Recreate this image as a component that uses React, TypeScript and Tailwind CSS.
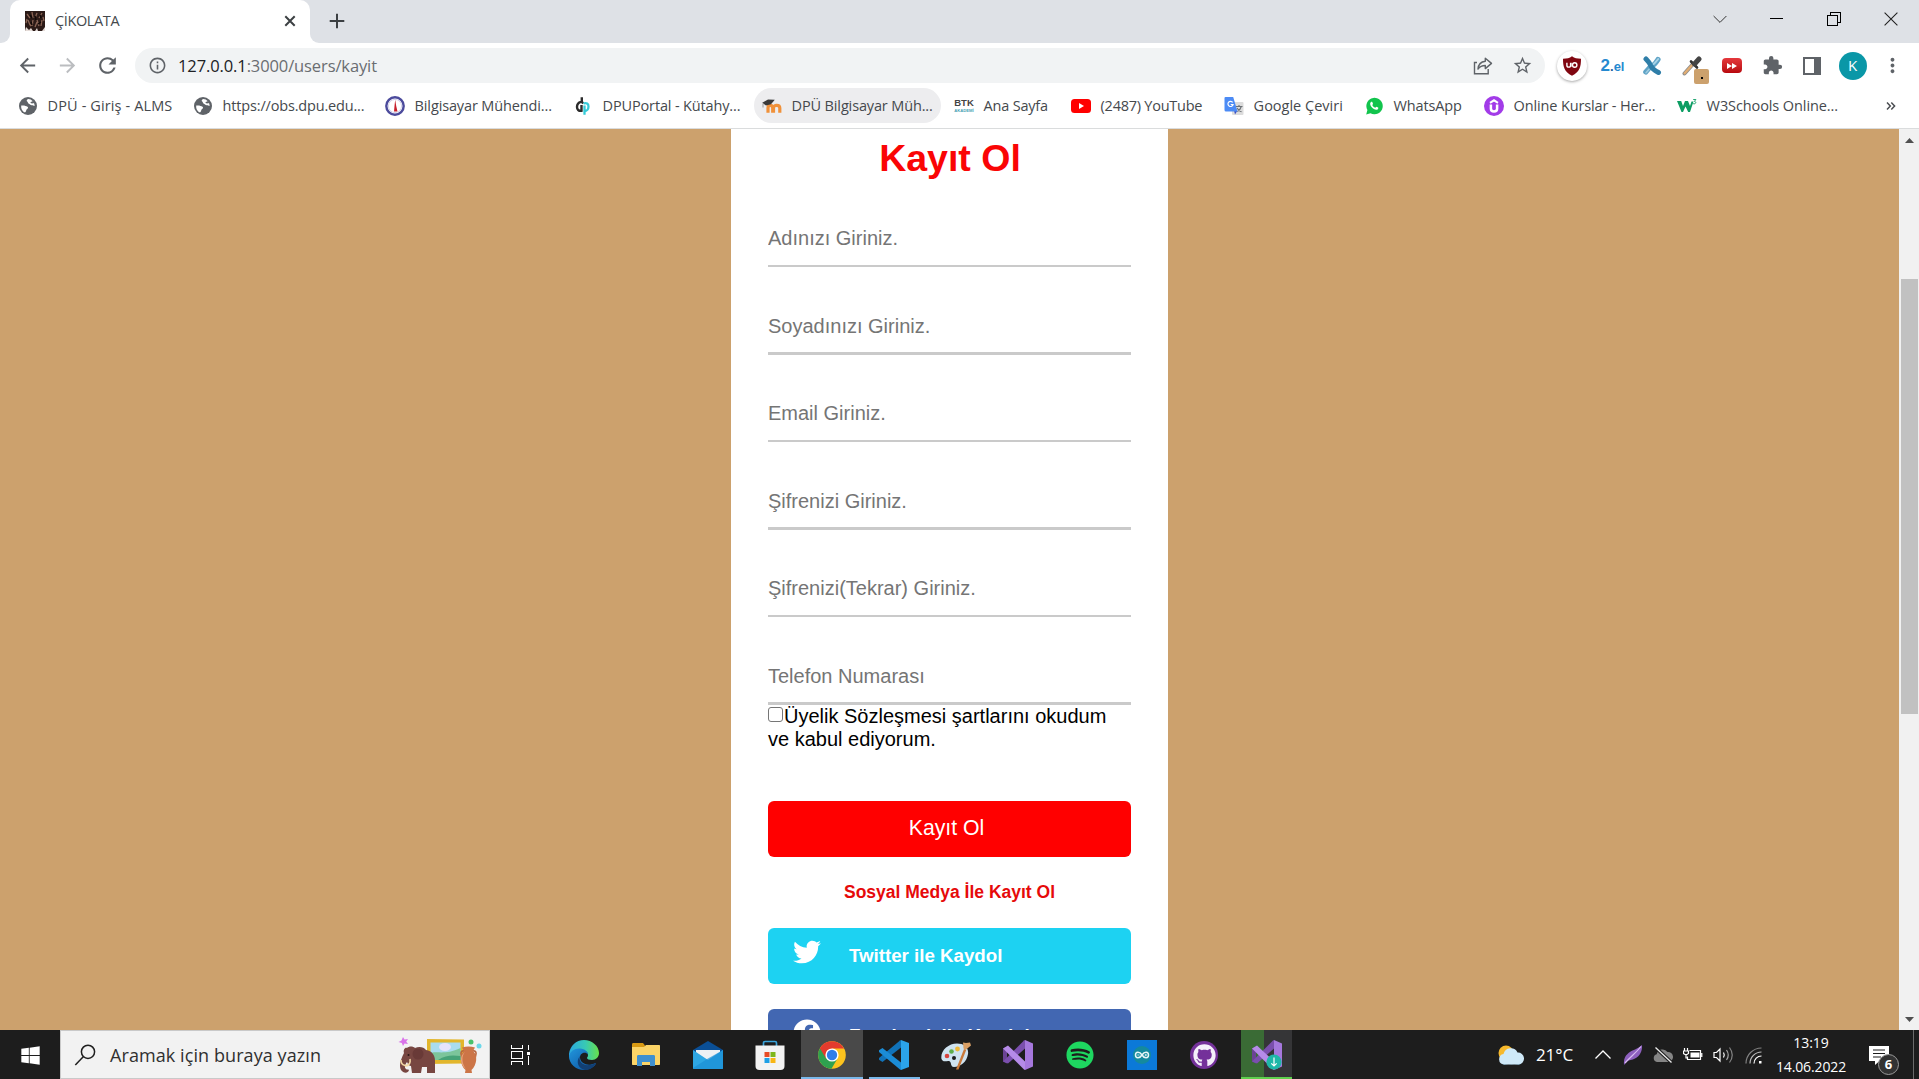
import React from 'react';
import type { ReactNode } from 'react';
import {
  MdArrowBack,
  MdArrowForward,
  MdExtension,
  MdInfoOutline,
  MdMoreVert,
  MdRefresh,
  MdStarBorder,
} from 'react-icons/md';
import { FaFacebook, FaGithub, FaSpotify, FaTwitter, FaWindows } from 'react-icons/fa';

/* ---------- Bookmark icons ---------- */

const Globe = () => (
  <svg viewBox="0 0 20 20" className="size-5">
    <circle cx="10" cy="10" r="9" fill="#5f6368" />
    <path d="M3.200 9.600c2.400-.6 4.800.2 6.300 1.200.9.7.6 1.900-.4 2.300-.9.4-.8 1.800-1.500 2.800-.4.5-1.100.6-1.600.3A7.200 7.200 0 0 1 3.200 9.600z" fill="#fff" />
    <path d="M10.300 3.100c-1.700.6-2 1.800-1.100 2.500 1 .7.4 1.700 1.700 2.200 1.400.5 1.600 1.500 3 1.400 1.300-.1 1.700.8 2.900.5A7 7 0 0 0 10.300 3.100z" fill="#fff" />
    <path d="M14.800 4.900c-.9.8-2 .5-2.500 1.500l1.500 1.100 2.700-.5z" fill="#5f6368" />
  </svg>
);

const Seal = () => (
  <svg viewBox="0 0 20 20" className="size-5">
    <circle cx="10" cy="10" r="8.700" fill="#fff" stroke="#4b4a9c" strokeWidth="2.400" />
    <circle cx="10" cy="10" r="6.600" fill="none" stroke="#c9c8e4" strokeWidth=".8" />
    <path d="M10.200 3.800l1 6.200 1.300 5.500H9l.5-5.500z" fill="#c8202c" />
  </svg>
);

const Dpu = () => (
  <svg viewBox="0 0 20 20" className="size-5" fill="none">
    <path d="M8.800 1.200v4.600l1.500 1.700M8 5.800C5.200 6.500 4 8.500 4 11s1.700 4.200 4.500 3.800V9" stroke="#2b2b2b" strokeWidth="2.400" />
    <path d="M11.500 18.800V9.500M10.500 7.500c3-1.200 5 .3 5 3s-1.700 4.700-4 4.700" stroke="#35cbd8" strokeWidth="2.300" />
  </svg>
);

const Moodle = () => (
  <svg viewBox="0 0 20 20" className="size-5" fill="none">
    <path d="M6 16.800v-5c0-3.200 4.500-3.200 4.700 0v5M11.500 16.800v-5c0-3.200 6.300-3.200 6.300.2v4.800" stroke="#f0913a" strokeWidth="3.200" />
    <path d="M.2 6.800L6 3.500l6.800.3L9 8.200 4 9.500z" fill="#3a3a3a" />
    <path d="M1 7.500v4" stroke="#999" />
  </svg>
);

const Btk = () => (
  <span className="flex w-5 flex-col items-center font-['Liberation_Sans'] leading-none">
    <span className="text-[9.5px] font-bold text-[#444]">BTK</span>
    <span className="mt-px text-[4.200px] font-bold text-[#4aa3b5]">AKADEMİ</span>
  </span>
);

const YouTube = () => (
  <svg viewBox="0 0 20 20" className="size-5">
    <rect y="3" width="20" height="14" rx="3.500" fill="#f00" />
    <path d="M8 7l5 3-5 3z" fill="#fff" />
  </svg>
);

const Translate = () => (
  <svg viewBox="0 0 20 20" className="size-5">
    <rect x="8" y="6" width="11.500" height="13" rx="1" fill="#dcdcdc" />
    <path d="M11.500 10.500h7M15 9v1.500M17.300 10.500c-.6 2.500-2.500 4-4 5M13 12c.8 1.500 2.800 3.200 4.500 3.800" stroke="#6b7075" strokeWidth="1.100" fill="none" />
    <path d="M10 14.500l3.500 0-2.500 4z" fill="#3a4fc4" />
    <path d="M1.500 1h7.700L13.500 15.500H2A1.500 1.500 0 0 1 .5 14V2A1 1 0 0 1 1.500 1z" fill="#4c8bf5" />
    <path d="M8.700 6.400A2.600 2.600 0 1 0 9.100 8.500H6.700" stroke="#fff" strokeWidth="1.200" fill="none" />
  </svg>
);

const WhatsApp = () => (
  <svg viewBox="0 0 20 20" className="size-5">
    <path d="M2.200 18.400l1.200-4.300A8.200 8.200 0 1 1 6.500 17.200z" fill="#12c44d" />
    <path d="M7.300 5.800c.5-.2.9-.1 1.100.4l.6 1.500c.1.5-.6 1-.7 1.300.6 1.300 1.600 2.200 2.900 2.700.4 0 .9-1.100 1.300-1l1.600.8c.5.3.1 1.500-.5 1.900-3 1.700-8.400-3.500-7.300-6.400.2-.6.600-1 1-1.200z" fill="#fff" />
  </svg>
);

const Udemy = () => (
  <svg viewBox="0 0 20 20" className="size-5" fill="none">
    <circle cx="10" cy="10" r="10" fill="#a23be8" />
    <path d="M6 6.800l4-2.500 4 2.500" stroke="#fff" strokeWidth="2" />
    <path d="M6.900 8.500v4.200c0 3.600 6.200 3.600 6.200 0V8.500" stroke="#fff" strokeWidth="2.500" />
  </svg>
);

const W3 = () => (
  <svg viewBox="0 0 20 20" className="size-5">
    <path d="M0 5h4.200l1.800 5 2-5h3l2 5 1.500-4.500h2L13 16h-1.800L8.500 10.500 6 16H4.500z" fill="#0c9d63" />
    <path d="M16.200 3.500h2.700l-1.500 1.900c2 .1 1.700 2.400-.2 2.400-.6 0-1-.2-1.200-.5" stroke="#0c9d63" strokeWidth=".9" fill="none" />
  </svg>
);

type Bookmark = { label: string; icon: ReactNode; box: string; text: string; active?: boolean };

const bookmarks: Bookmark[] = [
  { label: 'DPÜ - Giriş - ALMS', icon: <Globe />, box: 'w-[175px]', text: 'tracking-[0.12px]' },
  { label: 'https://obs.dpu.edu...', icon: <Globe />, box: 'w-[192px]', text: 'tracking-[-0.17px]' },
  { label: 'Bilgisayar Mühendi...', icon: <Seal />, box: 'w-[188px]', text: 'tracking-[-0.13px]' },
  { label: 'DPUPortal - Kütahy...', icon: <Dpu />, box: 'w-[189px]', text: 'tracking-[-0.15px]' },
  { label: 'DPÜ Bilgisayar Müh...', icon: <Moodle />, box: 'w-[187px] mr-[5px]', text: 'tracking-[-0.14px]', active: true },
  { label: 'Ana Sayfa', icon: <Btk />, box: 'w-[117px]', text: 'tracking-[-0.2px]' },
  { label: '(2487) YouTube', icon: <YouTube />, box: 'w-[153px]', text: 'tracking-[-0.25px]' },
  { label: 'Google Çeviri', icon: <Translate />, box: 'w-[140px]', text: 'tracking-normal' },
  { label: 'WhatsApp', icon: <WhatsApp />, box: 'w-[120px]', text: 'tracking-[-0.15px]' },
  { label: 'Online Kurslar - Her...', icon: <Udemy />, box: 'w-[193px]', text: 'tracking-[-0.14px]' },
  { label: 'W3Schools Online...', icon: <W3 />, box: 'w-[180px]', text: 'tracking-[-0.1px]' },
];

/* ---------- Browser chrome ---------- */

function TabStrip() {
  return (
    <div className="flex h-[43px] shrink-0 bg-[#dee1e6]">
      <div className="flex w-2.5 items-end bg-white">
        <div className="h-full w-full rounded-br-[9px] bg-[#dee1e6]" />
      </div>
      <div className="flex w-[300px] bg-[#dee1e6]">
        <div className="flex w-full items-center rounded-t-[10px] bg-white pb-px pl-[15px] pr-[13px]">
          <svg viewBox="0 0 20 20" className="size-5" fill="none">
            <rect width="20" height="20" fill="#2b1a17" />
            <path d="M2 3l3 4M7 1l1 6M12 2l-2 5M17 2l-3 5M3 9l2 5M8 9l-1 6M12 9l2 6M17 9l-1 6M5 15l3-3M10 16l2-5M1 12l1-4M18 6l1 4" stroke="#8a6455" strokeWidth="1.300" />
            <path d="M5 4l2 3M10 5l1 4M15 4l1 3M6 11l1 3M13 13l3-2" stroke="#0f0807" strokeWidth="1.500" />
            <path d="M0 20l1-4 3 3 2-2 2 3zM10 20l2-3 1 3zM17 20l3-4v4z" fill="#e5dcd8" />
          </svg>
          <span className="mb-px ml-[10px] text-[14.5px] tracking-[-0.38px] text-[#45494d]">ÇİKOLATA</span>
          <svg viewBox="0 0 14 14" className="ml-auto size-3.5" stroke="#3c4043" strokeWidth="2">
            <path d="M2.300 2.300l9.400 9.400M11.700 2.300l-9.400 9.400" />
          </svg>
        </div>
      </div>
      <div className="w-2.5 bg-white">
        <div className="h-full w-full rounded-bl-[9px] bg-[#dee1e6]" />
      </div>
      <div className="flex flex-1 items-center">
        <svg viewBox="0 0 16 16" className="mb-px ml-[9px] size-4" stroke="#3c4043" strokeWidth="2">
          <path d="M8 .7v14.600M.7 8h14.600" />
        </svg>
        <div className="mb-[6px] ml-auto flex items-center text-black">
          <div className="flex w-[57px] justify-center">
            <svg viewBox="0 0 14 14" className="size-3.5" fill="none" stroke="#333">
              <path d="M.6 4L7 10.400 13.400 4" />
            </svg>
          </div>
          <div className="flex w-[57px] justify-center">
            <div className="h-px w-[13px] bg-black" />
          </div>
          <div className="flex w-[57px] justify-center">
            <svg viewBox="0 0 14 14" className="size-3.5" fill="none" stroke="#000" shapeRendering="crispEdges">
              <path d="M.5 3.500h10v10h-10zM3.500 3V.5h10v10H11" />
            </svg>
          </div>
          <div className="flex w-[57px] justify-center">
            <svg viewBox="0 0 14 14" className="size-3.5" fill="none" stroke="#222" strokeWidth="1.100">
              <path d="M.6.6l12.800 12.800M13.400.6L.6 13.400" />
            </svg>
          </div>
        </div>
      </div>
    </div>
  );
}

function Slot({ children }: { children: ReactNode }) {
  return <div className="flex w-10 shrink-0 items-center justify-center">{children}</div>;
}

function Toolbar() {
  return (
    <div className="flex h-[45px] shrink-0 items-center bg-white pl-[7px] text-[#5f6368]">
      <Slot><MdArrowBack className="size-[23px]" /></Slot>
      <Slot><MdArrowForward className="size-[23px] text-[#bbbdc0]" /></Slot>
      <Slot><MdRefresh className="ml-px size-[25px]" /></Slot>
      <div className="ml-2 flex h-[35px] w-[1410px] items-center rounded-full bg-[#f1f3f4] pl-[13px]">
        <MdInfoOutline className="size-[19px]" />
        <span className="ml-[11px] mt-px text-[16.5px] tracking-[-0.11px] text-[#6a6d71]">
          <span className="text-[#202124]">127.0.0.1</span>:3000/users/kayit
        </span>
        <div className="ml-auto mr-[3px] flex">
          <Slot>
            <svg viewBox="0 0 20 20" className="ml-px size-5" fill="none" stroke="#5f6368" strokeWidth="1.400">
              <path d="M4 6.500H1.500v11.300h13.700V13" />
              <path d="M12.300 2.200l6.200 5.200-6.200 5.200V9.500c-3.400 0-5.600 1.200-7.300 3.600.3-4.200 2.900-7.300 7.300-7.800z" strokeLinejoin="round" />
            </svg>
          </Slot>
          <Slot><MdStarBorder className="size-[21px]" /></Slot>
        </div>
      </div>
      <div className="ml-[7px] flex">
        <Slot>
          <div className="flex size-[30px] items-center justify-center rounded-full bg-white shadow-[0_1px_3px_rgba(0,0,0,0.35)]">
            <svg viewBox="0 0 20 20" className="size-5" fill="none">
              <path d="M10 .3c2.500 1.800 5 2.400 9 2.500 0 8-1.200 13-9 17C2.200 15.800 1 10.800 1 2.800c4-.1 6.500-.7 9-2.500z" fill="#800610" />
              <path d="M4.900 6.700v2.700c0 2.300 3.700 2.300 3.700 0V6.700M9 6.700v4.100" stroke="#fff" strokeWidth="1.400" />
              <circle cx="12.700" cy="9" r="2.200" stroke="#fff" strokeWidth="1.400" />
            </svg>
          </div>
        </Slot>
        <Slot>
          <span className="ml-px flex items-baseline font-['Liberation_Sans'] font-bold leading-none text-[#2589d0]">
            <span className="text-[17px]">2</span>
            <span className="text-[13px] text-[#1b5f9e]">.</span>
            <span className="text-[13px]">el</span>
          </span>
        </Slot>
        <Slot>
          <svg viewBox="0 0 20 20" className="size-5" fill="none" strokeLinecap="round">
            <path d="M16 3.500Q13 8.500 10 10T3.800 16" stroke="#5fa3c6" strokeWidth="5.200" />
            <path d="M4 3Q8 7 9 10T16.500 16.500" stroke="#2f7ea8" strokeWidth="5" />
            <path d="M16.200 3q-2.600 3.500-4.500 5" stroke="#a9d3e6" strokeWidth="2" />
            <path d="M4 16.800q1.500-1.500 3-3.500" stroke="#9ccadf" strokeWidth="1.600" />
          </svg>
        </Slot>
        <Slot>
          <div className="relative">
            <svg viewBox="0 0 20 20" className="size-5" fill="none" strokeLinecap="round">
              <path d="M2.500 17.500L11 8" stroke="#8c8c8c" strokeWidth="4" />
              <path d="M2.700 17.300l7-7.800" stroke="#e2ad72" strokeWidth="2.400" />
              <path d="M9 5.500l6 6" stroke="#333" strokeWidth="2.600" />
              <path d="M12.500 8L17 3" stroke="#444" strokeWidth="5" />
            </svg>
            <div className="absolute left-[12px] top-[13px] flex h-[15px] w-[15px] items-center justify-center rounded-[2px] bg-[#cca16d]">
              <div className="mt-1 size-[2px] bg-black" />
            </div>
          </div>
        </Slot>
        <Slot>
          <div className="flex h-[15px] w-5 items-center justify-center rounded-[4px] bg-linear-to-b from-[#e5383c] to-[#b8060d]">
            <svg viewBox="0 0 10 6" className="h-[6px] w-[10px]" fill="#fff">
              <path d="M0 0l5 3-5 3zM5 0l5 3-5 3z" />
            </svg>
          </div>
        </Slot>
        <Slot><MdExtension className="size-[21px]" /></Slot>
        <Slot>
          <div className="h-[18px] w-[18px] border-2 border-r-[7px] border-[#5f6368]" />
        </Slot>
        <Slot>
          <div className="ml-px flex size-7 items-center justify-center rounded-full bg-[#0a97a7] text-[15px] text-white">K</div>
        </Slot>
        <Slot><MdMoreVert className="size-[23px]" /></Slot>
      </div>
    </div>
  );
}

function BookmarkBar() {
  return (
    <div className="flex h-[41px] shrink-0 border-b border-[#dadcdd] bg-white pl-2.5">
      {bookmarks.map((b) => (
        <div
          key={b.label}
          className={`flex h-[35px] shrink-0 items-center rounded-full pl-2 ${b.box} ${b.active ? 'bg-[#ededef]' : ''}`}
        >
          {b.icon}
          <span className={`ml-[9.600px] whitespace-nowrap text-[14.5px] text-[#45494d] ${b.text}`}>{b.label}</span>
        </div>
      ))}
      <svg viewBox="0 0 10 10" className="ml-auto mr-[23px] mt-[13px] size-2.5" fill="none" stroke="#4a4d51" strokeWidth="1.500">
        <path d="M1 1.500L4.300 5 1 8.500M5.300 1.500L8.600 5 5.300 8.500" />
      </svg>
    </div>
  );
}

/* ---------- Page ---------- */

const fields = [
  { label: 'Adınızı Giriniz.', cls: 'mt-[26px] border-b-2 pb-0.5' },
  { label: 'Soyadınızı Giriniz.', cls: 'mt-[34px] border-b-3 pb-px' },
  { label: 'Email Giriniz.', cls: 'mt-[33px] border-b-2 pb-0.5' },
  { label: 'Şifrenizi Giriniz.', cls: 'mt-[34px] border-b-3 pb-px' },
  { label: 'Şifrenizi(Tekrar) Giriniz.', cls: 'mt-[33px] border-b-2 pb-0.5' },
  { label: 'Telefon Numarası', cls: 'mt-[34px] border-b-3 pb-px' },
];

function SignUpCard() {
  return (
    <form className="flex h-[1000px] w-[437px] flex-col bg-white px-[37px] font-['Liberation_Sans',sans-serif]">
      <h1 className="h-[58px] pl-px text-center text-[37.5px] font-bold leading-[58px] text-[#fa0505]">Kayıt Ol</h1>
      {fields.map((f) => (
        <input
          key={f.label}
          placeholder={f.label}
          className={`block h-[54px] w-full shrink-0 border-[#cacaca] text-[20px] outline-none placeholder:text-[#757575] ${f.cls}`}
        />
      ))}
      <p className="h-[46px] text-[20px] leading-[23px] text-black">
        <input
          type="checkbox"
          className="mr-px inline-block size-[15px] appearance-none rounded-[3px] border border-[#767676] bg-white align-[1px]"
        />
        Üyelik Sözleşmesi şartlarını okudum ve kabul ediyorum.
      </p>
      <button type="button" className="mt-[50px] h-14 shrink-0 rounded-md bg-[#ff0000] pr-[6px] text-[21.25px] text-white">
        Kayıt Ol
      </button>
      <div className="flex h-[71px] shrink-0 items-center justify-center text-[17.5px] font-bold text-[#e60a0a]">
        Sosyal Medya İle Kayıt Ol
      </div>
      <a className="flex h-14 shrink-0 items-center rounded-md bg-[#1dd2f2] pl-[25px] text-white">
        <FaTwitter className="mb-[9px] size-7" />
        <span className="ml-[28px] text-[18.75px] font-bold tracking-[-0.03px]">Twitter ile Kaydol</span>
      </a>
      <a className="mt-[25px] flex h-14 shrink-0 items-center rounded-md bg-[#4267b2] pl-[25px] text-white">
        <FaFacebook className="mb-[9px] size-7" />
        <span className="mb-0.5 ml-[28px] text-[18.75px] font-bold tracking-[-0.03px]">Facebook ile Kaydol</span>
      </a>
    </form>
  );
}

function Scrollbar() {
  return (
    <div className="flex w-5 shrink-0 flex-col items-center bg-[#f1f1f1] pt-[9px]">
      <svg viewBox="0 0 9 5" className="h-[5px] w-[9px]"><path d="M0 5L4.500 0 9 5z" fill="#505050" /></svg>
      <div className="mt-[136px] h-[435px] w-[17px] bg-[#c1c1c1]" />
      <svg viewBox="0 0 9 5" className="mb-2 mt-auto h-[5px] w-[9px]"><path d="M0 0L4.500 5 9 0z" fill="#505050" /></svg>
    </div>
  );
}

/* ---------- Taskbar icons ---------- */

const SearchArt = () => (
  <svg viewBox="0 0 88 40" className="h-10 w-[88px]">
    <path d="M5 1l1.500 2.500L10 3 8.200 5.500 10 8 6.500 7.500 5 10 3.800 7 .5 6 3.500 4.500z" fill="#d974ea" />
    <path d="M29 3l37 .5v24l-37 .5z" fill="#e2b62c" />
    <path d="M32.500 6.500h30v17.500h-30z" fill="#a9dcef" />
    <ellipse cx="47" cy="11" rx="6" ry="4" fill="#e6e4fb" />
    <path d="M32.500 17c8-2 16 2 30-5v12h-30z" fill="#7cc59b" />
    <path d="M40 24c8-5 14-5 22.500-4v4z" fill="#47a377" />
    <path d="M6 17c-1-3 1-6 3-5 2-2 6-2 8 0 4-2 9-1 11 2 6 1 9 5 9 11v12h-8v-6h-5l-1 6h-9l-1-7c-2 0-3-2-4-4-2 3-3 5-1 7 1 1 2 0 3 1-1 4-6 3-8 0-2-4-1-9 3-17z" fill="#774641" />
    <circle cx="20" cy="18" r="5.500" fill="#693a37" />
    <circle cx="10.500" cy="19" r="1" fill="#2b1615" />
    <path d="M3 24c0 6 6 7 9 3M12 23c1 5-2 7-5 7" fill="none" stroke="#f3d7a4" strokeWidth="1.600" />
    <path d="M66 15c-4-1-4 5-.5 8M75 15c4-1 4 5 .5 8" stroke="#b9663d" strokeWidth="1.600" fill="none" />
    <path d="M64 11.500q6.500-2 13 0l-2 3.500c5 4 4 14-1.500 19l.5 3h-7l.5-3c-5.500-5-6.500-15-1.500-19z" fill="#cc7547" />
    <path d="M67 16c-4 4-3 12 1 17-6-4-7-13-1-17z" fill="#e9a377" />
    <circle cx="73" cy="6" r="2.500" fill="#49c26c" />
    <circle cx="81" cy="10" r="2.500" fill="#6cd8ea" />
  </svg>
);

const TaskView = () => (
  <svg viewBox="0 0 22 22" className="size-[22px]" fill="none" stroke="#fff" shapeRendering="crispEdges">
    <path d="M2.500 1v3.500h11V1M2.500 21v-3.500h11V21M2.500 7.500h11v7h-11zM19.500 1v5M19.500 12v9" />
    <path d="M18 7.500h3v3h-3z" fill="#fff" stroke="none" />
  </svg>
);

const Edge = () => (
  <svg viewBox="0 0 30 30" className="size-[30px]">
    <defs>
      <linearGradient id="edgeTop" x1="0" x2="1"><stop offset="0" stopColor="#2aa8e0" /><stop offset=".55" stopColor="#38c9b4" /><stop offset="1" stopColor="#68e04a" /></linearGradient>
      <linearGradient id="edgeBody" x1="0" x2="1" y2="1"><stop offset="0" stopColor="#2196dc" /><stop offset="1" stopColor="#0c4f9c" /></linearGradient>
    </defs>
    <path d="M0 14C1 6 7 0 15 0s15 6 15 13c0 4-3 7-7 7-3 0-5-1-5-2 0-1 1-1 1-3 0-3-3-5-7-5-6 0-11 4-12 9z" fill="url(#edgeTop)" />
    <path d="M0 16C1 11 6 8 11 8.500c5 .2 8 3.500 8 6-2-3-8-2-8 3 0 5 6 8 11 7 3-.5 4-1.500 5-1-2 4-7 6.500-12 6.500C7 30 0 24 0 16z" fill="url(#edgeBody)" />
    <path d="M11 16c-2 5 3 10 9 9 4-.5 6-2 7-1.500-3 4.500-7 6.500-11 6.500-6-1-10-8-5-14z" fill="#123f73" />
  </svg>
);

const Explorer = () => (
  <svg viewBox="0 0 30 26" className="h-[26px] w-[30px]">
    <path d="M1 2.500C1 1.500 1.500 1 2.500 1H12l2 2.500V8H1z" fill="#d99a13" />
    <path d="M1 5h12l2-2h13c.7 0 1 .3 1 1v18c0 .7-.3 1-1 1H2c-.7 0-1-.3-1-1z" fill="#fbd467" />
    <path d="M6 14.500c0-1 .5-1.500 1.500-1.500h15c1 0 1.500.5 1.500 1.500V24h-5v-4h-8v4H6z" fill="#3f90cf" />
  </svg>
);

const Mail = () => (
  <svg viewBox="0 0 30 28" className="h-7 w-[30px]">
    <path d="M0 9L15 0l15 9v4H0z" fill="#0a4f96" />
    <path d="M3 9h24v10H3z" fill="#eef1f4" />
    <path d="M0 9l15 10L30 9v18c0 .6-.4 1-1 1H1c-.6 0-1-.4-1-1z" fill="#2ea7e4" />
    <path d="M0 27L15 17.500 30 9v18c0 .6-.4 1-1 1H1z" fill="#1b8fd6" opacity=".7" />
  </svg>
);

const Store = () => (
  <svg viewBox="0 0 30 30" className="size-[30px]">
    <path d="M8.500 7V3c0-1 .5-1.500 1.500-1.500h10c1 0 1.500.5 1.500 1.500v4" stroke="#3ba5dc" strokeWidth="1.700" fill="none" />
    <path d="M.5 5.500h29V26a4 4 0 0 1-4 4h-21a4 4 0 0 1-4-4z" fill="#f3f3f3" />
    <path d="M9.500 12h5v5h-5z" fill="#e84c25" />
    <path d="M15.500 12h5v5h-5z" fill="#7db61a" />
    <path d="M9.500 18h5v5h-5z" fill="#1ea0e6" />
    <path d="M15.500 18h5v5h-5z" fill="#f8b615" />
  </svg>
);

const Chrome = () => (
  <svg viewBox="0 0 28 28" className="size-7">
    <circle cx="14" cy="14" r="13.800" fill="#fcc31e" />
    <path d="M14 14L1.900 7.200A13.800 13.800 0 0 0 13.500 27.800l6-10.300z" fill="#2fa14f" />
    <path d="M1.900 7.200A13.800 13.800 0 0 1 26.100 7.500H14L8 17.500z" fill="#e33b2e" />
    <circle cx="14" cy="14" r="6.600" fill="#fff" />
    <circle cx="14" cy="14" r="5.200" fill="#2f7de9" />
  </svg>
);

const VsCode = () => (
  <svg viewBox="0 0 30 30" className="size-[30px]">
    <path d="M22 0l8 3v24l-8 3z" fill="#2ba4ea" />
    <path d="M22 7.500L3.500 22 0 19.800V18L21 .5l1-.5z" fill="#1173b9" />
    <path d="M22 22.500L3.500 8 0 10.200V12l21 17.500 1 .5z" fill="#1b8cd6" />
  </svg>
);

const Paint = () => (
  <svg viewBox="0 0 30 30" className="size-[30px]">
    <path d="M16 3.500c7 0 12 4 11 10.500-1 8-8 13-14 13-4 0-2-5-5-6-2-.7-6 2-7.500-2C-1 11 7 3.500 16 3.500z" fill="#cfe3f0" />
    <circle cx="13" cy="18" r="2" fill="#1d1d1d" />
    <circle cx="6" cy="16" r="2.300" fill="#d7453e" />
    <circle cx="10.500" cy="11.500" r="2.300" fill="#5fae4b" />
    <circle cx="16.500" cy="9" r="2.400" fill="#efb93a" />
    <path d="M15 29.500l8-20.500 2.200 1-7.700 19.500z" fill="#c9793a" />
    <path d="M22 2.500l3 .5 4-.5 1 3-5.500 4.500-2-1.500z" fill="#d9a066" />
  </svg>
);

const VisualStudio = () => (
  <svg viewBox="0 0 30 30" className="size-[30px]">
    <path d="M0 8.500L4 6.500v17L0 21.500z" fill="#6a4394" />
    <path d="M22 0l8 3.500v23L22 30z" fill="#a678dd" />
    <path d="M22 8.500L5 23.500l-5-2L21 .5l1-.5z" fill="#7b4fae" />
    <path d="M22 21.500L5 5.500l-5 3L21 29.500l1 .5z" fill="#b58be8" />
  </svg>
);

const Arduino = () => (
  <div className="flex size-[30px] items-center justify-center bg-[#0b79d8]">
    <svg viewBox="0 0 22 22" className="size-[22px]" fill="none">
      <circle cx="11" cy="11" r="9" fill="#148a9e" />
      <path d="M11 11C8.500 7 4.500 7.500 4.500 11s4 4 6.500 0 6.500-3.500 6.500 0-4 4-6.500 0z" stroke="#e8f6f7" strokeWidth="1.500" />
      <path d="M6.300 11h2.200M13.700 11h2.200M14.800 9.900v2.200" stroke="#e8f6f7" strokeWidth=".8" />
    </svg>
  </div>
);

const GithubDesktop = () => (
  <div className="flex size-7 items-center justify-center rounded-full bg-[#74319a]">
    <FaGithub className="size-[23px] text-[#f4effa]" />
  </div>
);

const VsInstaller = () => (
  <div className="relative">
    <VisualStudio />
    <svg viewBox="0 0 16 16" className="absolute left-[14px] top-[14px] size-4" fill="none">
      <circle cx="8" cy="8" r="7.600" fill="#1fb7a8" />
      <path d="M8 3.500v8.500M5.300 9.300L8 12l2.700-2.700" stroke="#fff" strokeWidth="1.200" />
    </svg>
  </div>
);

const apps: { name: string; icon: ReactNode; tile?: string; line?: string }[] = [
  { name: 'edge', icon: <Edge /> },
  { name: 'explorer', icon: <Explorer /> },
  { name: 'mail', icon: <Mail /> },
  { name: 'store', icon: <Store /> },
  { name: 'chrome', icon: <Chrome />, tile: 'bg-[#494949]', line: 'w-full bg-[#7ab8ea]' },
  { name: 'code', icon: <VsCode />, line: 'w-[51px] bg-[#7ab8ea]' },
  { name: 'paint', icon: <Paint /> },
  { name: 'vs', icon: <VisualStudio /> },
  { name: 'spotify', icon: <FaSpotify className="size-7 text-[#1ed760]" /> },
  { name: 'arduino', icon: <Arduino /> },
  { name: 'github', icon: <GithubDesktop /> },
  {
    name: 'installer',
    icon: <VsInstaller />,
    tile: 'ml-[6px] mr-1 w-[51px] bg-linear-to-r from-[#3a6b35] from-45% to-[#353537] to-45%',
    line: 'w-full bg-[#5fd04d]',
  },
];

function Tray() {
  return (
    <div className="ml-auto flex items-center text-white">
      <svg viewBox="0 0 26 20" className="h-5 w-[26px]">
        <circle cx="8" cy="8" r="7.500" fill="#f7b92c" />
        <path d="M6 19.500a5.300 5.300 0 0 1-.5-10.500 7.500 7.500 0 0 1 14-1.500 6 6 0 0 1 1 12z" fill="#cfe9f8" />
        <path d="M4 18.500c4 1.500 15 1.500 19 0-1 .8-2 1-3 1H6z" fill="#8cc6ea" />
      </svg>
      <span className="ml-[12px] mt-px w-[52px] text-[17px] tracking-[-0.1px]">21°C</span>
      <div className="flex w-[30px] justify-center">
        <svg viewBox="0 0 16 9" className="h-[9px] w-4" fill="none" stroke="#fff" strokeWidth="1.300"><path d="M.5 8.500L8 1l7.500 7.500" /></svg>
      </div>
      <div className="flex w-[30px] justify-center">
        <svg viewBox="0 0 20 20" className="size-5">
          <path d="M19 0c.5 6-2 11-7 13.500-3 1.500-6 1.500-8 3L1 20c-.5-6 1-9 4.500-12S15 4 19 0z" fill="#8d5fbd" />
          <path d="M18 1.500C12 9 7 12 2 18" stroke="#d9bdf0" strokeWidth="1.200" fill="none" />
        </svg>
      </div>
      <div className="flex w-[30px] justify-center">
        <svg viewBox="0 0 20 16" className="h-4 w-5">
          <path d="M4 15a4 4 0 0 1-.3-7.800A6 6 0 0 1 14.500 5 5 5 0 0 1 15.500 15z" fill="#858585" />
          <path d="M2.500.5l16 15" stroke="#1d1d1d" strokeWidth="3.500" />
          <path d="M2.500.5l16 15" stroke="#eee" strokeWidth="1.300" />
        </svg>
      </div>
      <div className="flex w-[30px] justify-center">
        <svg viewBox="0 0 20 14" className="h-3.5 w-5" fill="none" stroke="#fff">
          <path d="M6.500 2.500h11v9h-13v-3M18.800 5v4" strokeWidth="1.200" />
          <path d="M7.500 4.500h9v5h-9z" fill="#fff" stroke="none" />
          <path d="M1.500 0v2.500M4.500 0v2.500M.5 3h5v2.500l-1.500 1H2L.5 5.500zM3 6.500v3.500h2" strokeWidth="1.200" />
        </svg>
      </div>
      <div className="flex w-[30px] justify-center">
        <svg viewBox="0 0 21 18" className="h-[18px] w-[21px]" fill="none" stroke="#fff" strokeWidth="1.200">
          <path d="M1 6.500h2.500L7 3v12l-3.500-3.500H1z" />
          <path d="M10.500 6.500q1.500 2.500 0 5" />
          <path d="M13.500 4q3.500 5 0 10" opacity=".6" />
          <path d="M16.500 1.500q5.500 7.500 0 15" opacity=".45" />
        </svg>
      </div>
      <div className="flex w-[30px] justify-center">
        <svg viewBox="0 0 17 17" className="mt-0.5 size-[17px]" fill="none" stroke="#fff" strokeWidth="1.200">
          <path d="M1 16.500A15.500 15.500 0 0 1 16.500 1" opacity=".45" />
          <path d="M5 16.500A11.500 11.500 0 0 1 16.500 5" opacity=".7" />
          <path d="M9 16.500A7.500 7.500 0 0 1 16.500 9" />
          <path d="M14 14h2.500v2.500H14z" fill="#fff" stroke="none" />
        </svg>
      </div>
      <div className="ml-[5px] flex w-[76px] flex-col items-center text-[14px] leading-[24px]">
        <span>13:19</span>
        <span className="tracking-[-0.13px]">14.06.2022</span>
      </div>
      <div className="relative ml-5 mr-[24px]">
        <svg viewBox="0 0 20 20" className="size-5">
          <path d="M0 1h20v15h-9.500L6 20v-4H0z" fill="#fff" />
          <path d="M4 5h12M4 8.500h12M4 12h8" stroke="#1d1d1d" strokeWidth="1.200" />
        </svg>
        <div className="absolute left-[9px] top-[9px] flex size-[21px] items-center justify-center rounded-full border border-[#9a9a9a] bg-[#333] text-[13px] font-bold leading-none">
          6
        </div>
      </div>
      <div className="mr-[5px] h-[49px] w-px bg-[#6b6b6b]" />
    </div>
  );
}

function Taskbar() {
  return (
    <div className="flex h-[49px] shrink-0 bg-[#1d1d1d]">
      <div className="flex w-[60px] items-center justify-center">
        <FaWindows className="mt-0.5 size-[21px] text-white" />
      </div>
      <div className="flex w-[430px] items-center border border-[#c9c9c9] bg-[#f2f2f2] pl-[13px]">
        <svg viewBox="0 0 22 22" className="size-[22px]" fill="none" stroke="#1f1f1f" strokeWidth="1.500">
          <circle cx="14" cy="7.800" r="6.600" />
          <path d="M9.500 12.500L1.300 21" />
        </svg>
        <span className="ml-[14px] mt-[2px] text-[18px] tracking-[0.08px] text-[#303030]">Aramak için buraya yazın</span>
        <div className="ml-auto mr-[3px] mt-[2px]"><SearchArt /></div>
      </div>
      <div className="mr-[3px] flex w-[60px] items-center justify-center"><TaskView /></div>
      {apps.map((a) => (
        <div key={a.name} className={`flex flex-col items-center ${a.tile ?? ''} ${a.name === 'installer' ? '' : 'w-[62px]'}`}>
          <div className="flex h-[49px] items-center pt-px">{a.icon}</div>
          {a.line && <div className={`-mt-0.5 h-0.5 ${a.line}`} />}
        </div>
      ))}
      <Tray />
    </div>
  );
}

export default function App() {
  return (
    <div className="flex h-[1079px] w-[1919px] flex-col overflow-hidden bg-white font-['Open_Sans','Noto_Sans',sans-serif]">
      <TabStrip />
      <Toolbar />
      <BookmarkBar />
      <div className="flex h-[901px] shrink-0 overflow-hidden">
        <main className="flex flex-1 justify-center overflow-hidden bg-[#cca16d]">
          <SignUpCard />
        </main>
        <Scrollbar />
      </div>
      <Taskbar />
    </div>
  );
}
